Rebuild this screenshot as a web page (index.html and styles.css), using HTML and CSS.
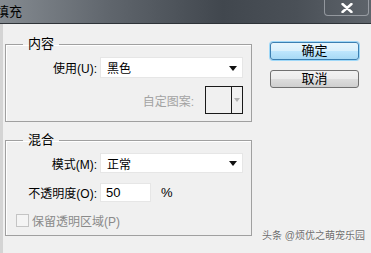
FILE: index.html
```html
<!DOCTYPE html>
<html lang="zh-CN">
<head>
    <meta charset="UTF-8">
    <title>填充</title>
    <link rel="stylesheet" href="styles.css">
</head>
<body>
    <div class="window">
        <div class="titlebar">
            <span class="title">填充</span>
            <div class="close-btn">
                <svg width="12" height="10" viewBox="0 0 12 10"><path d="M1.5 1 L10.5 9 M10.5 1 L1.5 9" stroke="#fff" stroke-width="2.4" stroke-linecap="round"/></svg>
            </div>
        </div>
        <div class="content">
            <div class="groups">
                <!-- 内容 -->
                <fieldset class="group group-content">
                    <legend>内容</legend>
                    <div class="row">
                        <label class="row-label">使用(U):</label>
                        <div class="dropdown">
                            <span>黑色</span>
                            <svg class="arrow" width="8" height="5" viewBox="0 0 8 5"><path d="M0 0 H8 L4 5 Z" fill="#111"/></svg>
                        </div>
                    </div>
                    <div class="row row-pattern">
                        <span class="muted">自定图案:</span>
                        <div class="pattern-box">
                            <div class="pattern-swatch"></div>
                            <div class="pattern-arrow">
                                <svg width="6" height="4" viewBox="0 0 6 4"><path d="M0 0 H6 L3 4 Z" fill="#b0b0b0"/></svg>
                            </div>
                        </div>
                    </div>
                </fieldset>

                <!-- 混合 -->
                <fieldset class="group group-blend">
                    <legend>混合</legend>
                    <div class="row">
                        <label class="row-label">模式(M):</label>
                        <div class="dropdown dropdown-mode">
                            <span>正常</span>
                            <svg class="arrow" width="8" height="5" viewBox="0 0 8 5"><path d="M0 0 H8 L4 5 Z" fill="#111"/></svg>
                        </div>
                    </div>
                    <div class="row row-opacity">
                        <label class="row-label">不透明度(O):</label>
                        <div class="num-input">50</div>
                        <span class="unit">%</span>
                    </div>
                    <div class="row row-check">
                        <span class="checkbox"></span>
                        <span class="muted">保留透明区域(P)</span>
                    </div>
                </fieldset>
            </div>
            <div class="actions">
                <div class="btn btn-primary">确定</div>
                <div class="btn">取消</div>
            </div>
        </div>
        <div class="watermark">头条 @烦优之萌宠乐园</div>
    </div>
</body>
</html>
```

FILE: styles.css
```css
  body {
      margin: 0;
      padding: 0;
      font-family: 'Liberation Sans', 'Noto Sans CJK SC', sans-serif;
      font-size: 12px;
      color: #000;
      background: #f0f0f0;
  }
  .window {
      position: relative;
      width: 371px;
      height: 253px;
      overflow: hidden;
      background: #f0f0f0;
      box-shadow: inset 3px 0 0 #d4d4d4;
  }
  .titlebar {
      height: 23px;
      display: flex;
      align-items: center;
      justify-content: space-between;
      background: linear-gradient(to right, #858b91 0%, #5f656c 30%, #41474e 60%, #4a5057 80%, #5e646b 100%);
      border-bottom: 1px solid #2e3338;
  }
  .title {
      font-size: 13px;
      margin-left: -4px;
      color: #000;
      line-height: 23px;
  }
  .close-btn {
      align-self: flex-start;
      width: 43px;
      height: 15px;
      margin-right: 2px;
      border: 1px solid rgba(200, 205, 210, 0.55);
      border-top: none;
      border-radius: 0 0 4px 4px;
      display: flex;
      align-items: center;
      justify-content: center;
  }
  .content {
      display: flex;
      padding: 13px 0 0 5px;
  }
  .groups {
      width: 247px;
  }
  .group {
      margin: 0;
      padding: 6px 8px 7px 17px;
      border: 1px solid #a0a0a0;
      box-shadow: inset 1px 1px 0 #fff;
  }
  .group legend {
      margin: 0;
      padding: 0 5px;
      font-size: 13px;
      line-height: 14px;
  }
  .group-blend {
      margin-top: 11px;
      padding-bottom: 6px;
  }
  .row {
      display: flex;
      align-items: center;
  }
  .row-label {
      width: 74px;
      text-align: right;
      margin-right: 3px;
      white-space: nowrap;
  }
  .dropdown {
      flex: 1;
      height: 21px;
      background: #fff;
      border: 1px solid #e6e6e6;
      box-sizing: border-box;
      display: flex;
      align-items: center;
      justify-content: space-between;
      padding: 0 5px 0 6px;
  }
  .dropdown-mode {
      height: 20px;
  }
  .arrow {
      margin-top: 1px;
  }
  .row-pattern {
      justify-content: flex-end;
      margin-top: 8px;
  }
  .muted {
      color: #a3a3a3;
  }
  .pattern-box {
      width: 38px;
      height: 28px;
      margin-left: 11px;
      border: 1px solid #1a1a1a;
      box-sizing: border-box;
      display: flex;
  }
  .pattern-swatch {
      width: 25px;
      border-right: 1px solid #1a1a1a;
  }
  .pattern-arrow {
      flex: 1;
      display: flex;
      align-items: center;
      justify-content: center;
  }
  .row-opacity {
      margin-top: 10px;
  }
  .num-input {
      width: 51px;
      height: 19px;
      background: #fff;
      border: 1px solid #e6e6e6;
      box-sizing: border-box;
      padding-left: 5px;
      line-height: 18px;
      font-size: 13px;
  }
  .unit {
      margin-left: 10px;
      font-size: 13px;
  }
  .row-check {
      margin-top: 10px;
      margin-left: -7px;
  }
  .checkbox {
      width: 11px;
      height: 11px;
      border: 1px solid #c4c4c4;
      background: #f4f4f4;
      margin-right: 3px;
  }
  .row-check .muted {
      color: #8a8a8a;
      font-size: 12px;
  }
  .actions {
      margin-left: 18px;
      padding-top: 5px;
      width: 89px;
      display: flex;
      flex-direction: column;
      gap: 10px;
  }
  .btn {
      height: 18px;
      box-sizing: border-box;
      border: 1px solid #707070;
      border-radius: 3px;
      background: linear-gradient(#f2f2f2 0%, #ebebeb 50%, #dddddd 51%, #cfcfcf 100%);
      text-align: center;
      line-height: 16px;
      font-size: 13px;
  }
  .btn-primary {
      border-color: #3c7fb1;
      background: linear-gradient(#e8f6fd 0%, #d9f0fc 50%, #bee6fd 51%, #a7d9f5 100%);
      box-shadow: 0 0 0 1px #9fd8f8;
  }
  .watermark {
      position: absolute;
      right: 6px;
      bottom: 11px;
      font-size: 10px;
      color: #6e6e6e;
      text-shadow: 0 0 2px #fff;
  }
```
